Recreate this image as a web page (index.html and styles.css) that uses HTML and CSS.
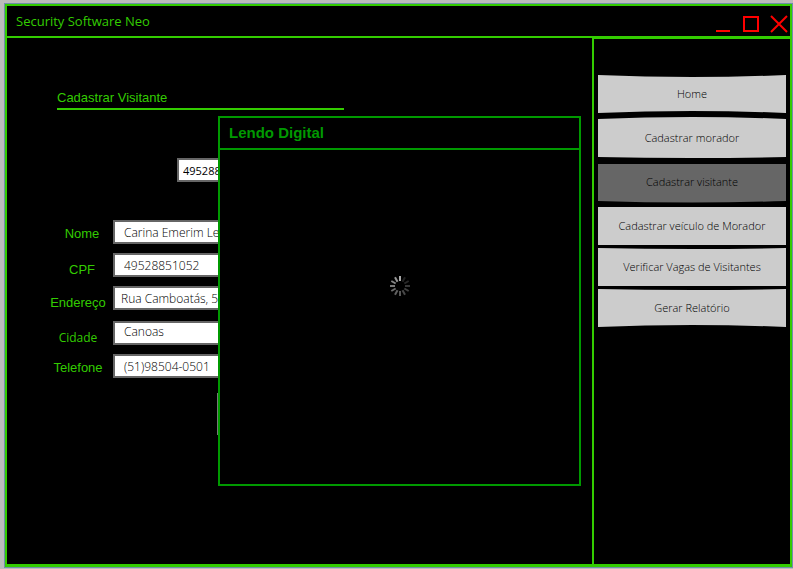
FILE: index.html
```html
<!DOCTYPE html>
<html lang="pt-BR">
<head>
<meta charset="utf-8">
<title>Security Software Neo</title>
<link rel="stylesheet" href="styles.css">
</head>
<body>
<div class="window">
  <header class="titlebar">
    <h1>Security Software Neo</h1>
    <div class="controls">
      <button type="button" aria-label="Minimizar"><svg width="18" height="18" viewBox="0 0 18 18"><path d="M2 16h14"/></svg></button>
      <button type="button" aria-label="Maximizar"><svg width="18" height="18" viewBox="0 0 18 18"><path d="M2 2h14v14H2z"/></svg></button>
      <button type="button" aria-label="Fechar"><svg width="18" height="18" viewBox="0 0 18 18"><path d="M1 1l16 16M17 1L1 17"/></svg></button>
    </div>
  </header>
  <div class="body">
    <main>
      <h2>Cadastrar Visitante</h2>
      <form>
        <input class="field search" type="text" aria-label="Buscar CPF" value="49528851052">
        <div class="fields">
          <div class="group">
            <label class="short" for="nome">Nome</label><input class="field" id="nome" type="text" value="Carina Emerim Leal">
            <label class="low short" for="cpf">CPF</label><input class="field" id="cpf" type="text" value="49528851052">
            <label class="low" for="endereco">Endereço</label><input class="field wide" id="endereco" type="text" value="Rua Camboatás, 58">
          </div>
          <div class="group">
            <label class="low humanist" for="cidade">Cidade</label><input class="field high" id="cidade" type="text" value="Canoas">
            <label for="telefone">Telefone</label><input class="field" id="telefone" type="text" value="(51)98504-0501">
          </div>
        </div>
        <button class="submit" type="button" aria-label="Ler digital"></button>
      </form>
      <section class="modal" role="dialog" aria-labelledby="modal-title">
        <h3 id="modal-title">Lendo Digital</h3>
        <div class="loading">
          <svg width="22" height="22" viewBox="-11 -11 22 22" role="img" aria-label="Carregando">
            <g stroke-width="2">
              <path stroke="#aaa" d="M0-5V-10"/>
              <path stroke="#222" d="M0-5V-10" transform="rotate(30)"/>
              <path stroke="#292929" d="M0-5V-10" transform="rotate(60)"/>
              <path stroke="#383838" d="M0-5V-10" transform="rotate(90)"/>
              <path stroke="#404040" d="M0-5V-10" transform="rotate(120)"/>
              <path stroke="#484848" d="M0-5V-10" transform="rotate(150)"/>
              <path stroke="#555" d="M0-5V-10" transform="rotate(180)"/>
              <path stroke="#606060" d="M0-5V-10" transform="rotate(210)"/>
              <path stroke="#6c6c6c" d="M0-5V-10" transform="rotate(240)"/>
              <path stroke="#777" d="M0-5V-10" transform="rotate(270)"/>
              <path stroke="#858585" d="M0-5V-10" transform="rotate(300)"/>
              <path stroke="#969696" d="M0-5V-10" transform="rotate(330)"/>
            </g>
          </svg>
        </div>
      </section>
    </main>
    <nav>
      <div class="menu">
        <button type="button"><svg viewBox="0 0 188 42" preserveAspectRatio="none"><path d="M0 2Q94 6 188 2V40Q94 36 0 40z"/></svg><span>Home</span></button>
        <button type="button"><svg viewBox="0 0 188 42" preserveAspectRatio="none"><path d="M0 2Q94-2 188 2V40Q94 42 0 40z"/></svg><span>Cadastrar morador</span></button>
        <button type="button" class="current"><svg viewBox="0 0 188 42" preserveAspectRatio="none"><path d="M0 3H188V40Q94 43 0 40z"/></svg><span>Cadastrar visitante</span></button>
      </div>
      <div class="menu tight">
        <button type="button"><svg viewBox="0 0 188 42" preserveAspectRatio="none"><path d="M0 2H188V40H0z"/></svg><span>Cadastrar veículo de Morador</span></button>
        <button type="button"><svg viewBox="0 0 188 42" preserveAspectRatio="none"><path d="M0 2Q94 4 188 2V40H0z"/></svg><span>Verificar Vagas de Visitantes</span></button>
        <button type="button"><svg viewBox="0 0 188 42" preserveAspectRatio="none"><path d="M0 2Q94 4 188 2V40Q94 36 0 40z"/></svg><span>Gerar Relatório</span></button>
      </div>
    </nav>
  </div>
</div>
</body>
</html>
```
FILE: styles.css
```css
* { box-sizing: border-box; }

body {
  margin: 0;
  min-height: 100vh;
  padding: 3px 0 1px 4px;
  display: flex;
  background: #bcbcbc;
  color: #3c0;
  font-family: "Liberation Sans", sans-serif;
  font-size: 13px;
}

h1, h2, h3 { margin: 0; font-weight: 400; }
button { padding: 0; border: 0; background: none; font: inherit; }

.window {
  flex: 1;
  display: flex;
  flex-direction: column;
  border: 1px solid #6f8fa8;
  background: #000;
}

.titlebar {
  display: flex;
  justify-content: space-between;
  height: 34px;
  padding: 0 2px 0 9px;
  border: 2px solid #3c0;
}

h1 {
  font-family: "Open Sans", sans-serif;
  font-size: 13px;
  line-height: 30px;
}

.controls { display: flex; align-items: flex-end; gap: 10px; }
.controls button { display: flex; padding-bottom: 3px; }
.controls path { fill: none; stroke: #f00; stroke-width: 2; }

.body {
  flex: 1;
  display: flex;
  border: 2px solid #3c0;
  border-top: 0;
  border-bottom-width: 3px;
}

main { position: relative; flex: 1; padding: 52px 0 0 50px; }

h2 {
  width: 287px;
  padding-bottom: 3px;
  border-bottom: 2px solid #3c0;
  font-size: 13px;
  line-height: 15px;
}

form { display: flex; flex-direction: column; align-items: flex-start; padding-top: 48px; }

.field {
  height: 24px;
  width: 250px;
  padding: 0 9px;
  border: 2px solid #666;
  background: #fff;
  color: #000;
  font-family: "Open Sans", sans-serif;
  font-weight: 300;
  font-size: 12px;
}
.field.search { width: 190px; margin-left: 120px; padding: 0 4px; font-size: 11px; font-weight: 400; }
.field.wide { padding: 0 6px; }
.field.high { padding-bottom: 4px; }

.fields { display: grid; gap: 11px; margin: 38px 0 0 -14px; }
.group { display: grid; grid-template-columns: 70px 250px; row-gap: 9px; }
.group label { height: 24px; padding-top: 2px; line-height: 24px; text-align: center; }
.group .low { padding-top: 5px; }
.group .short { padding-left: 8px; }
.group .humanist { font-family: "Open Sans", sans-serif; font-size: 12px; }

.submit {
  width: 120px;
  height: 42px;
  margin: 15px 0 0 160px;
  border: 1px solid #777;
}

.modal {
  position: absolute;
  top: 78px;
  left: 211px;
  width: 363px;
  height: 370px;
  display: flex;
  flex-direction: column;
  border: 2px solid #090;
  background: #000;
}
h3 {
  padding: 0 9px;
  border-bottom: 2px solid #090;
  color: #090;
  font-size: 15px;
  font-weight: 700;
  line-height: 30px;
}
.loading { flex: 1; display: flex; justify-content: center; padding-top: 125px; }

nav {
  width: 198px;
  display: flex;
  flex-direction: column;
  gap: 6px;
  padding: 36px 4px 0;
  border-left: 2px solid #3c0;
  border-top: 1px solid #3c0;
}
.menu { display: flex; flex-direction: column; gap: 6px; }
.menu.tight { gap: 3px; }
.menu button {
  position: relative;
  height: 38px;
  padding-bottom: 2px;
  color: #000;
  font-family: "Open Sans", sans-serif;
  font-size: 11px;
  font-weight: 300;
}
.menu svg { position: absolute; left: 0; top: -2px; width: 100%; height: 42px; fill: #ccc; }
.menu .current svg { fill: #666; }
.menu span { position: relative; }
```
